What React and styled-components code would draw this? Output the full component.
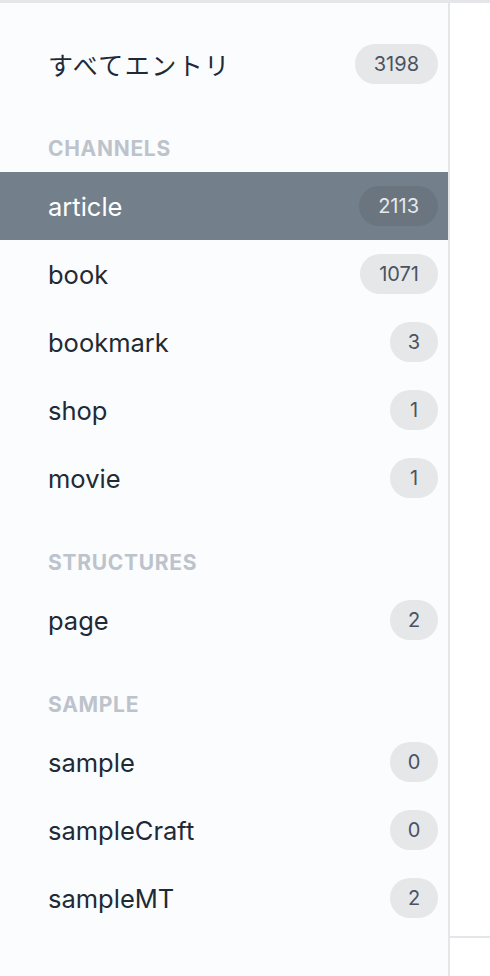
import React from 'react';
import styled, { createGlobalStyle } from 'styled-components';

const GlobalStyle = createGlobalStyle`
  html, body {
    margin: 0;
    padding: 0;
    background: #fff;
  }
  body {
    font-family: Inter, "Noto Sans CJK JP", "Noto Sans", sans-serif;
    -webkit-font-smoothing: antialiased;
  }
`;

const Page = styled.div`
  display: flex;
  height: 976px;
  border-top: 3px solid #e4e6e9;
  box-sizing: border-box;
`;

const Sidebar = styled.nav`
  width: 448px;
  flex-shrink: 0;
  background: #fbfcfe;
  border-right: 2px solid #e4e6e9;
  padding-top: 27px;
  box-sizing: content-box;
`;

const Main = styled.div`
  flex: 1;
  display: flex;
  flex-direction: column;
  justify-content: flex-end;
  background: #fff;
`;

const Footer = styled.div`
  height: 38px;
  border-top: 2px solid #e4e6e9;
`;

const Heading = styled.h6`
  margin: 0;
  padding: 39px 48px 11px;
  font-size: 21px;
  line-height: 24px;
  font-weight: 700;
  letter-spacing: 0.7px;
  color: #bdc3cb;
  text-transform: uppercase;
`;

const Item = styled.a`
  display: flex;
  align-items: center;
  justify-content: space-between;
  height: 68px;
  padding: 0 10px 0 48px;
  font-size: 25.5px;
  color: ${p => (p.$active ? '#fff' : '#202a36')};
  background: ${p => (p.$active ? '#737f8a' : 'transparent')};
  text-decoration: none;
`;

const Label = styled.span`
  font-size: ${p => (p.$cjk ? '25px' : 'inherit')};
  letter-spacing: ${p => (p.$cjk ? '1.5px' : '0')};
`;

const Badge = styled.span`
  min-width: 48px;
  height: 40px;
  padding: 0 ${p => (p.$wide ? '19px' : '0')};
  box-sizing: border-box;
  display: inline-flex;
  align-items: center;
  justify-content: center;
  border-radius: 20px;
  font-size: 20px;
  color: ${p => (p.$active ? '#e6e9ec' : '#4b5361')};
  background: ${p => (p.$active ? '#6a757f' : '#e6e7e9')};
`;

const groups = [
  {
    heading: 'Channels',
    items: [
      { label: 'article', count: 2113, active: true },
      { label: 'book', count: 1071 },
      { label: 'bookmark', count: 3 },
      { label: 'shop', count: 1 },
      { label: 'movie', count: 1 },
    ],
  },
  {
    heading: 'Structures',
    items: [{ label: 'page', count: 2 }],
  },
  {
    heading: 'Sample',
    items: [
      { label: 'sample', count: 0 },
      { label: 'sampleCraft', count: 0 },
      { label: 'sampleMT', count: 2 },
    ],
  },
];

const App = () => (
  <>
    <GlobalStyle />
    <Page>
      <Sidebar>
        <Item href="#">
          <Label $cjk>すべてエントリ</Label>
          <Badge $wide>3198</Badge>
        </Item>
        {groups.map(group => (
          <React.Fragment key={group.heading}>
            <Heading>{group.heading}</Heading>
            {group.items.map(item => (
              <Item href="#" key={item.label} $active={item.active}>
                <Label>{item.label}</Label>
                <Badge $active={item.active} $wide={item.count > 9}>
                  {item.count}
                </Badge>
              </Item>
            ))}
          </React.Fragment>
        ))}
      </Sidebar>
      <Main>
        <Footer />
      </Main>
    </Page>
  </>
);

export default App;
